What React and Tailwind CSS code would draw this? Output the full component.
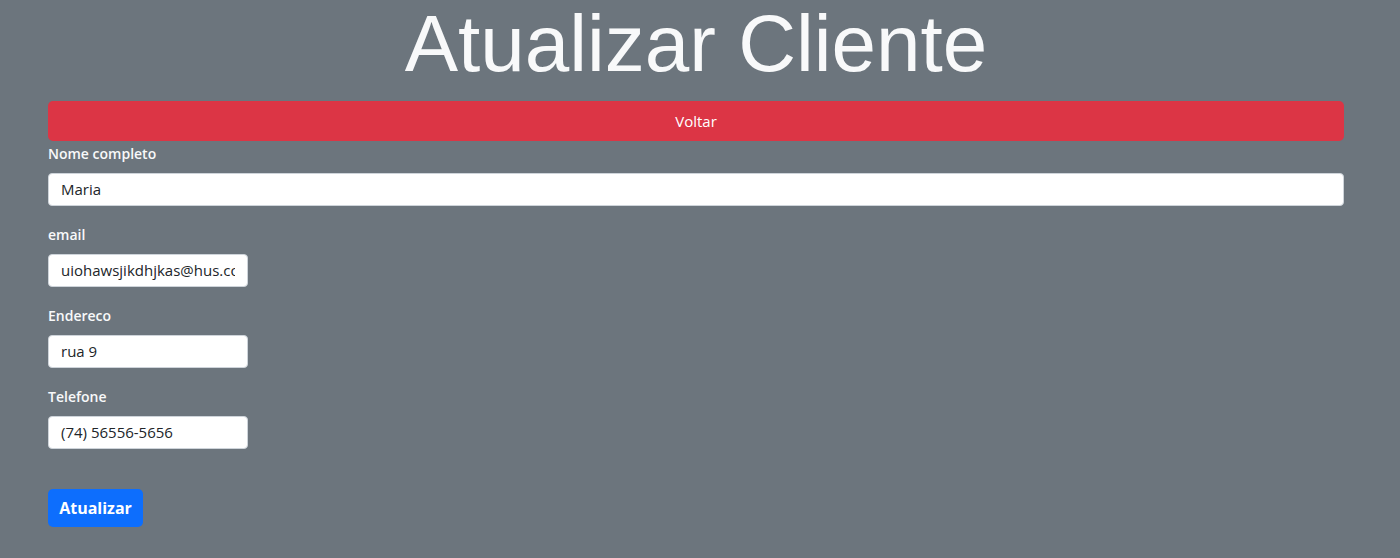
export default function App() {
  const font = { fontFamily: '"Open Sans", "Noto Sans", sans-serif' };
  const fields = [
    { label: "email", value: "uiohawsjikdhjkas@hus.com" },
    { label: "Endereco", value: "rua 9" },
    { label: "Telefone", value: "(74) 56556-5656" },
  ];
  return (
    <div className="min-h-[558px] w-full bg-[#6c757d]" style={font}>
      <div className="ml-[48px] w-[1296px]">
        <h1 className="h-[101px] text-center text-[80px] leading-[88px] text-[#f8f9fa] font-['Liberation_Sans',Arial,sans-serif]">
          Atualizar Cliente
        </h1>
        <button className="flex h-[40px] w-full items-center justify-center rounded-[5px] bg-[#dc3545] text-[15px] text-white">
          Voltar
        </button>
        <div className="pt-[1.5px]">
          <label className="mb-[9px] block h-[21px] text-[14px] font-semibold leading-[21px] text-[#f8f9fa]">
            Nome completo
          </label>
          <input
            readOnly
            value="Maria"
            className="mb-[17.5px] block h-[33.5px] w-full rounded-[4px] border border-[#ced4da] bg-white px-[12px] text-[15px] text-[#212529] outline-none"
          />
          {fields.map((f, i) => (
            <div key={f.label}>
              <label className="mb-[9px] block h-[21px] text-[14px] font-semibold leading-[21px] text-[#f8f9fa]">
                {f.label}
              </label>
              <input
                readOnly
                value={f.value}
                className={
                  i < fields.length - 1
                    ? "mb-[17.5px] block h-[33.5px] w-[200px] rounded-[4px] border border-[#ced4da] bg-white px-[12px] text-[15px] text-[#212529] outline-none"
                    : "block h-[33.5px] w-[200px] rounded-[4px] border border-[#ced4da] bg-white px-[12px] text-[15px] text-[#212529] outline-none"
                }
              />
            </div>
          ))}
          <button className="mt-[40px] flex h-[38px] w-[95px] items-center justify-center rounded-[5px] bg-[#0d6efd] text-[16px] font-bold text-white">
            Atualizar
          </button>
        </div>
      </div>
    </div>
  );
}
